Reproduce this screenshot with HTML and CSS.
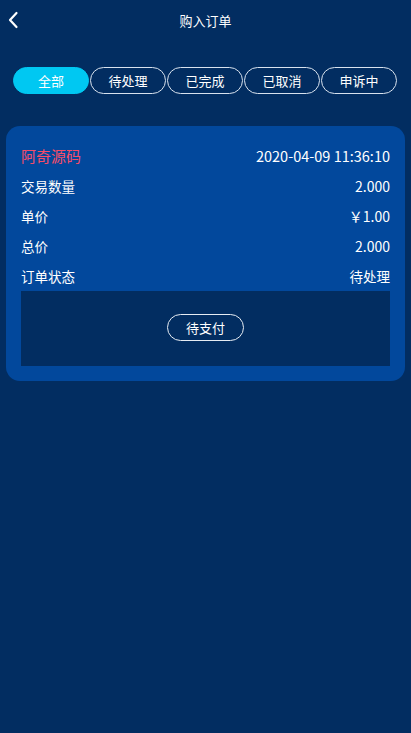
FILE: index.html
```html
<!DOCTYPE html>
<html lang="zh">
<head>
<meta charset="utf-8">
<title>购入订单</title>
<link rel="stylesheet" href="styles.css">
</head>
<body>
<header class="topbar">
  <span class="back"><svg width="12" height="18" viewBox="0 0 12 18"><path d="M9.5 2 L3 9 L9.5 16" fill="none" stroke="#fff" stroke-width="2.2" stroke-linecap="round" stroke-linejoin="round"/></svg></span>
  <h1 class="title">购入订单</h1>
</header>
<nav class="tabs">
  <span class="tab active">全部</span>
  <span class="tab">待处理</span>
  <span class="tab">已完成</span>
  <span class="tab">已取消</span>
  <span class="tab">申诉中</span>
</nav>
<section class="card">
  <div class="row head">
    <span class="name">阿奇源码</span>
    <span class="date">2020-04-09 11:36:10</span>
  </div>
  <div class="row"><span>交易数量</span><span class="num">2.000</span></div>
  <div class="row"><span>单价</span><span class="num">￥1.00</span></div>
  <div class="row"><span>总价</span><span class="num">2.000</span></div>
  <div class="row"><span>订单状态</span><span>待处理</span></div>
  <div class="actions"><span class="btn">待支付</span></div>
</section>
</body>
</html>
```
FILE: styles.css
```css
html, body {
  margin: 0;
  padding: 0;
  background: #022d61;
  color: #fff;
  font-family: "Noto Sans CJK SC", "Noto Sans", sans-serif;
  min-height: 100%;
}
body { height: 733px; }
.topbar {
  position: relative;
  height: 40px;
  display: flex;
  align-items: center;
  justify-content: center;
}
.back {
  position: absolute;
  left: 7px;
  top: 11px;
  display: flex;
}
.title {
  margin: 0;
  font-size: 13px;
  font-weight: normal;
  line-height: 1;
}
.tabs {
  display: flex;
  gap: 1px;
  padding: 27px 14px 0 13px;
}
.tab {
  width: 75px;
  height: 25px;
  border: 1px solid #d8e2ee;
  border-radius: 14px;
  display: flex;
  align-items: center;
  justify-content: center;
  font-size: 13px;
  line-height: 1;
}
.tab.active {
  background: #00c8f2;
  border-color: #00c8f2;
}
.card {
  margin: 32px 6px 0 6px;
  background: #02489c;
  border-radius: 14px;
  padding: 14px 15px 15px 15px;
}
.row {
  display: flex;
  justify-content: space-between;
  align-items: center;
  height: 30px;
  font-size: 13.5px;
}
.row.head {
  height: 31px;
  font-size: 15px;
}
.num { font-size: 14px; }
.date { font-size: 14.5px; }
.name { color: #f84d68; }
.actions {
  background: #022d61;
  height: 75px;
  display: flex;
  align-items: center;
  justify-content: center;
}
.btn {
  width: 75px;
  height: 25px;
  border: 1px solid #e6ecf3;
  border-radius: 14px;
  display: flex;
  align-items: center;
  justify-content: center;
  font-size: 13px;
  line-height: 1;
  margin-top: -2px;
}
```
